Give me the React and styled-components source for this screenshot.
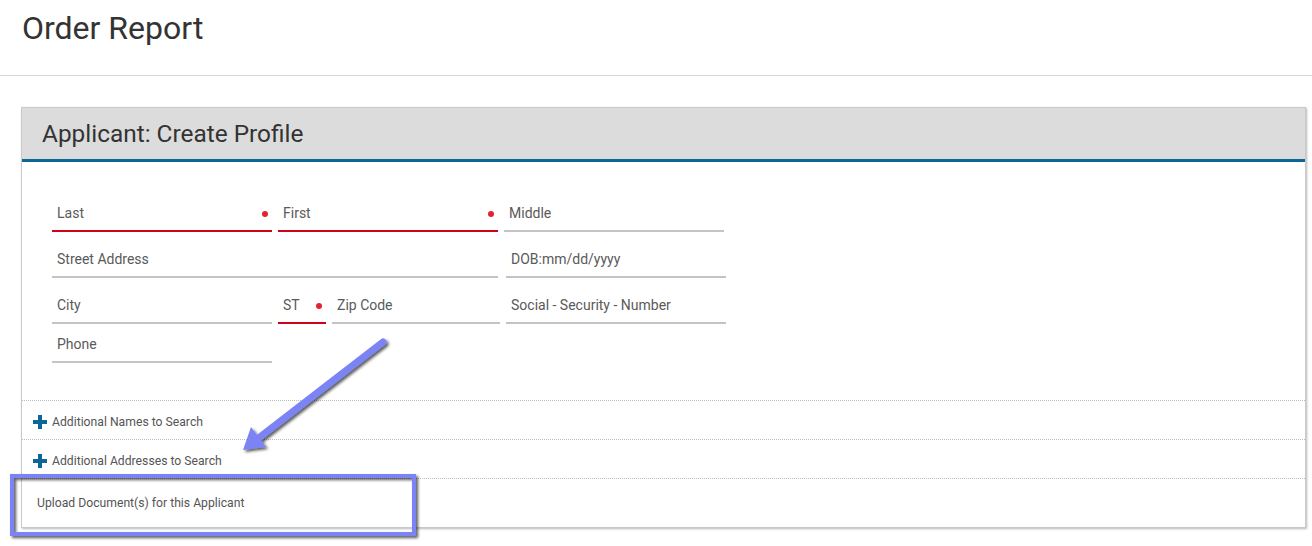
import React from 'react';
import styled, { createGlobalStyle } from 'styled-components';

const GlobalStyle = createGlobalStyle`
  body {
    margin: 0;
    background: #fff;
    font-family: Roboto, 'Liberation Sans', sans-serif;
    color: #555;
  }
`;

const Page = styled.div`
  position: relative;
  width: 1312px;
  height: 546px;
  overflow: hidden;
`;

const TopBar = styled.header`
  height: 75px;
  border-bottom: 1px solid #d6d6d6;
  padding-left: 22px;

  h1 {
    margin: 0;
    padding-top: 8px;
    font-size: 32px;
    font-weight: 400;
    color: #333;
    line-height: 40px;
  }
`;

const Panel = styled.section`
  margin: 31px 6px 0 21px;
  border: 1px solid #c9c9c9;
  box-shadow: 1px 1px 2px rgba(0, 0, 0, 0.28);
  background: #fff;
`;

const PanelHeader = styled.div`
  height: 51px;
  background: #dcdcdc;
  border-bottom: 3px solid #0d6698;
  padding-left: 20px;
  display: flex;
  align-items: center;

  h2 {
    margin: 0;
    font-size: 24.4px;
    font-weight: 400;
    color: #333;
  }
`;

const Form = styled.div`
  padding: 32px 0 37px 30px;
  display: flex;
  flex-direction: column;
`;

const Row = styled.div`
  display: flex;
  gap: ${p => p.$gap || 6}px;
  margin-top: ${p => p.$top || 0}px;
`;

const Field = styled.div`
  position: relative;
  width: ${p => p.$w}px;
  height: 34px;
  padding: 2px 0 0 5px;
  border-bottom: 2px solid ${p => (p.$required ? '#d0021b' : '#c4c4c4')};
  display: flex;
  align-items: center;
  box-sizing: content-box;
  font-size: 14px;
  color: #5a5a5a;

  &::after {
    content: '';
    display: ${p => (p.$required ? 'block' : 'none')};
    position: absolute;
    right: 4px;
    top: 17px;
    width: 6px;
    height: 6px;
    border-radius: 50%;
    background: #e3222e;
  }
`;

const ToggleRow = styled.div`
  height: 35px;
  padding: 3px 0 0 11px;
  border-top: 1px dotted #bdbdbd;
  display: flex;
  align-items: center;
  gap: 5px;
  font-size: 12.2px;
  color: #555;
`;

const UploadRow = styled.div`
  height: 48px;
  padding-left: 15px;
  border-top: 1px dotted #bdbdbd;
  display: flex;
  align-items: center;
  font-size: 12.2px;
  color: #555;
`;

const Overlay = styled.svg`
  position: absolute;
  left: 0;
  top: 0;
  pointer-events: none;
`;

const Plus = () => (
  <svg width="14" height="14" viewBox="0 0 14 14">
    <rect x="5" y="0" width="4" height="14" fill="#0d6698" />
    <rect x="0" y="5" width="14" height="4" fill="#0d6698" />
  </svg>
);

const F = ({ w, label, required }) => (
  <Field $w={w - 5} $required={required}>
    {label}
  </Field>
);

export default function App() {
  return (
    <>
      <GlobalStyle />
      <Page>
        <TopBar>
          <h1>Order Report</h1>
        </TopBar>
        <Panel>
          <PanelHeader>
            <h2>Applicant: Create Profile</h2>
          </PanelHeader>
          <Form>
            <Row>
              <F w={220} label="Last" required />
              <F w={220} label="First" required />
              <F w={220} label="Middle" />
            </Row>
            <Row $gap={8} $top={8}>
              <F w={446} label="Street Address" />
              <F w={220} label="DOB:mm/dd/yyyy" />
            </Row>
            <Row $top={8}>
              <F w={220} label="City" />
              <F w={48} label="ST" required />
              <F w={168} label="Zip Code" />
              <F w={220} label="Social - Security - Number" />
            </Row>
            <Row $top={1}>
              <F w={220} label="Phone" />
            </Row>
          </Form>
          <ToggleRow>
            <Plus />
            Additional Names to Search
          </ToggleRow>
          <ToggleRow>
            <Plus />
            Additional Addresses to Search
          </ToggleRow>
          <UploadRow>Upload Document(s) for this Applicant</UploadRow>
        </Panel>
        <Overlay width="1312" height="546">
          <defs>
            <filter id="sh" x="-20%" y="-20%" width="140%" height="140%">
              <feDropShadow dx="2" dy="2" stdDeviation="1.5" floodColor="#000" floodOpacity="0.65" />
            </filter>
          </defs>
          <g filter="url(#sh)">
            <rect x="12" y="476" width="402" height="58" fill="none" stroke="#7b83f4" strokeWidth="4" />
            <line x1="383" y1="342" x2="256" y2="440" stroke="#7b83f4" strokeWidth="7" strokeLinecap="round" />
            <polygon points="243,450 251,427 266,447" fill="#7b83f4" />
          </g>
        </Overlay>
      </Page>
    </>
  );
}
